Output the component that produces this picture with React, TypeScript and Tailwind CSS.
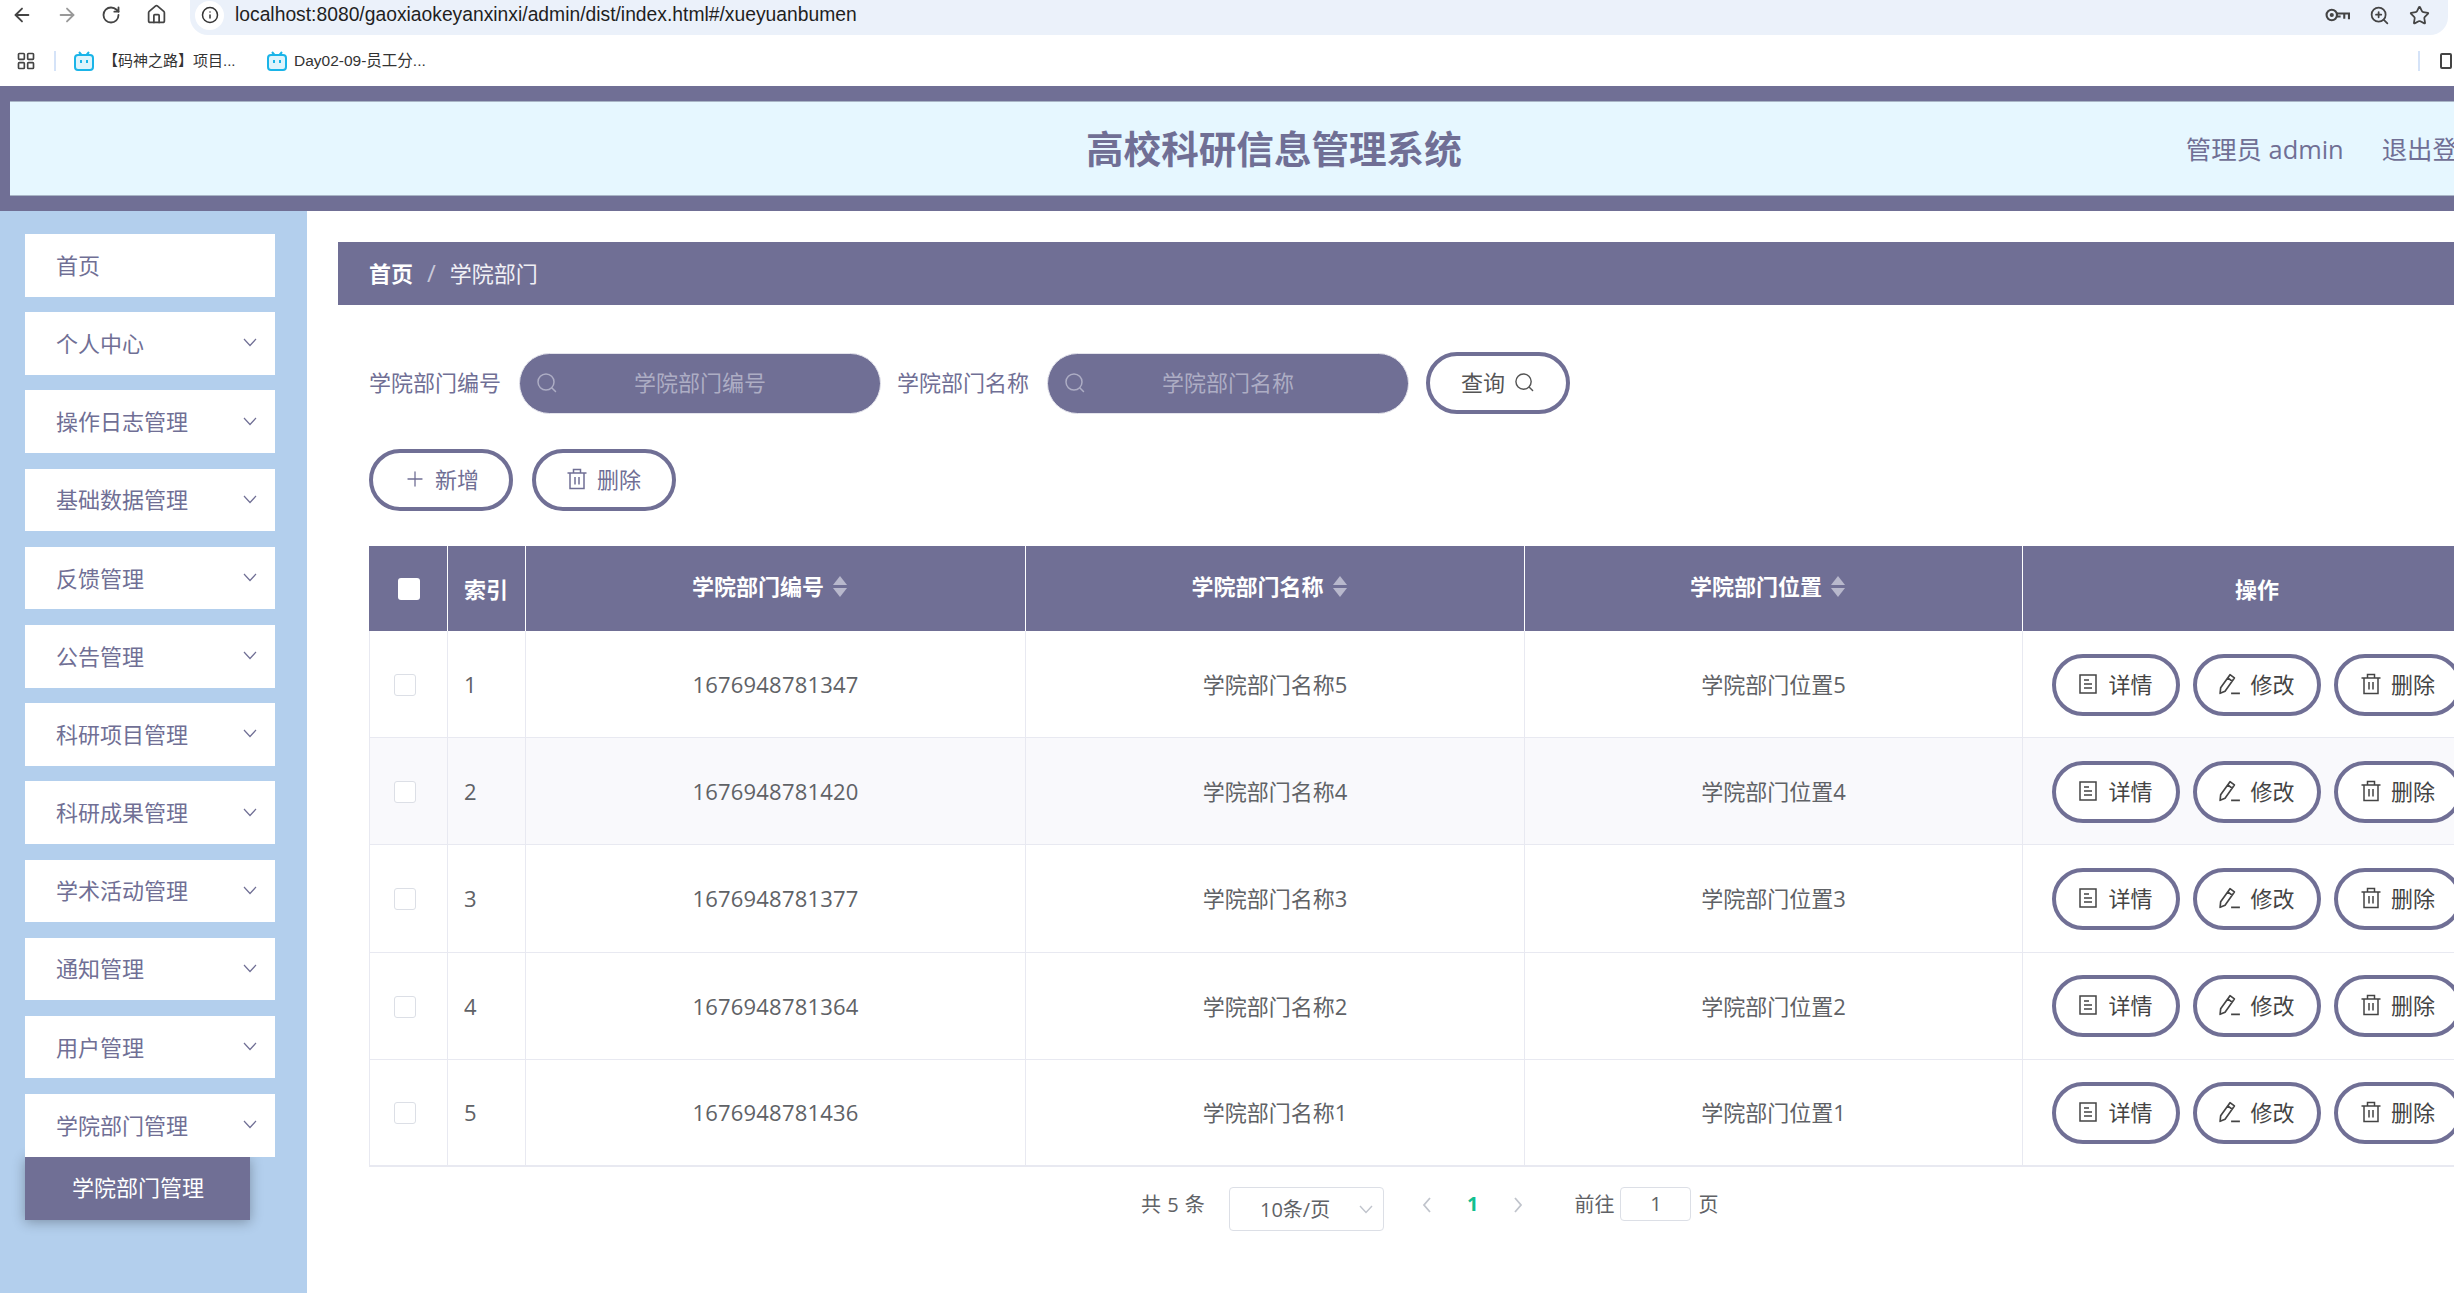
import React from "react";
import { ArrowLeft, ArrowRight, RotateCw, House, Info, ZoomIn, Star, LayoutGrid, Plus } from "lucide-react";

const SearchIcon = ({ className }: { className: string }) => (
  <svg viewBox="0 0 22 22" fill="none" stroke="currentColor" strokeWidth="1.5" strokeLinecap="round" className={className}>
    <circle cx="10" cy="10" r="8" />
    <path d="M16 16l3.5 3.5" />
  </svg>
);
const TrashIcon = ({ className }: { className: string }) => (
  <svg viewBox="0 0 20 22" fill="none" stroke="currentColor" strokeWidth="1.5" className={className}>
    <path d="M0.5 5h19M6.5 5V1.5h7V5M3 5v15.5h14V5M8 9v7.5M12 9v7.5" />
  </svg>
);
const DocIcon = ({ className }: { className: string }) => (
  <svg viewBox="0 0 18 20" fill="none" stroke="currentColor" strokeWidth="1.5" className={className}>
    <path d="M1 1h16v18H1zM5 6h5M5 10h8M5 14h8" />
  </svg>
);
const EditIcon = ({ className }: { className: string }) => (
  <svg viewBox="0 0 20 20" fill="none" stroke="currentColor" strokeWidth="1.5" strokeLinejoin="round" className={className}>
    <path d="M10 1.5l4 3-8.5 12-4.5 2 .5-5zM8 4.5l4 3M11 18.5h8" />
  </svg>
);
const Chevron = () => (
  <svg viewBox="0 0 14 9" fill="none" stroke="currentColor" strokeWidth="1.2" className="h-[9px] w-[14px] text-[#706f95]">
    <path d="M1 1l6 6.5L13 1" />
  </svg>
);
const Bili = () => (
  <svg viewBox="0 0 20 20" className="h-[20px] w-[20px] shrink-0" fill="none">
    <path d="M5 1l2.5 3M15 1l-2.5 3" stroke="#1ab4e8" strokeWidth="2" />
    <rect x="1" y="4" width="18" height="15" rx="3" fill="#dff4fc" stroke="#1ab4e8" strokeWidth="2" />
    <rect x="6" y="9" width="2" height="3" fill="#1ab4e8" />
    <rect x="12" y="9" width="2" height="3" fill="#1ab4e8" />
  </svg>
);
const KeyIcon = () => (
  <svg viewBox="0 0 24 14" fill="none" stroke="#444" strokeWidth="2" className="h-[16px] w-[25px]">
    <circle cx="6.5" cy="7" r="5" />
    <circle cx="6.5" cy="7" r="1" />
    <path d="M11 5.5h12v5.5M18.5 5.5v5M11 8.5h4" />
  </svg>
);

const menu = ["首页", "个人中心", "操作日志管理", "基础数据管理", "反馈管理", "公告管理", "科研项目管理", "科研成果管理", "学术活动管理", "通知管理", "用户管理", "学院部门管理"];
const rows = [
  ["1", "1676948781347", "学院部门名称5", "学院部门位置5"],
  ["2", "1676948781420", "学院部门名称4", "学院部门位置4"],
  ["3", "1676948781377", "学院部门名称3", "学院部门位置3"],
  ["4", "1676948781364", "学院部门名称2", "学院部门位置2"],
  ["5", "1676948781436", "学院部门名称1", "学院部门位置1"],
];

const SortHead = ({ label }: { label: string }) => (
  <div className="flex h-full items-center justify-center gap-[9px] border-r border-white pb-[5px] pr-[12px] font-bold text-white">
    <span>{label}</span>
    <span className="flex flex-col gap-[3px]">
      <span className="h-0 w-0 border-x-[7px] border-b-[9px] border-x-transparent border-b-[#b8b8cc]" />
      <span className="h-0 w-0 border-x-[7px] border-t-[9px] border-x-transparent border-t-[#b8b8cc]" />
    </span>
  </div>
);

const SearchField = ({ label }: { label: string }) => (
  <>
    <span className="pb-[2px] text-[#706f95]">{label}</span>
    <div className="relative ml-[18px] flex h-[61px] w-[362px] items-center justify-center rounded-full border border-[#e4e4ec] bg-[#706f95] pb-[2px] text-[#adadc4]">
      <SearchIcon className="absolute left-[16px] top-[18px] h-[22px] w-[22px]" />
      <span>{label}</span>
    </div>
  </>
);

const OutlineBtn = ({ children, className }: { children: React.ReactNode; className: string }) => (
  <button className={`flex h-[62px] items-center justify-center rounded-full border-[4px] border-[#706f95] bg-white pb-[2px] ${className}`}>{children}</button>
);

export default function App() {
  return (
    <div className="h-[1293px] w-[2454px] overflow-hidden bg-white font-['Open_Sans','Noto_Sans_CJK_SC',sans-serif] text-[22px] leading-[30px]">
      {/* browser chrome */}
      <div className="flex h-[35px] items-center">
        <div className="flex w-[190px] shrink-0 items-center pb-[6px] pl-[11px] text-[#444]">
          <ArrowLeft className="h-[22px] w-[22px]" strokeWidth={2} />
          <ArrowRight className="ml-[23px] h-[22px] w-[22px] text-[#999]" strokeWidth={2} />
          <RotateCw className="ml-[23px] h-[20px] w-[20px]" strokeWidth={2.2} />
          <House className="ml-[25px] h-[21px] w-[21px]" strokeWidth={2} />
        </div>
        <div className="flex h-[35px] w-[2258px] items-center justify-between rounded-b-[18px] bg-[#ebf1fa] pb-[5px] pl-[5px] pr-[18px]">
          <div className="flex items-center">
            <span className="flex h-[29px] w-[29px] items-center justify-center rounded-full bg-white">
              <Info className="h-[18px] w-[18px] text-[#333]" strokeWidth={2} />
            </span>
            <span className="ml-[11px] font-['Liberation_Sans',sans-serif] text-[19.3px] leading-[26px] text-[#1f1f1f]">localhost:8080/gaoxiaokeyanxinxi/admin/dist/index.html#/xueyuanbumen</span>
          </div>
          <div className="flex items-center gap-[19px]">
            <KeyIcon />
            <ZoomIn className="h-[21px] w-[21px] text-[#444]" strokeWidth={2} />
            <Star className="h-[21px] w-[21px] text-[#444]" strokeWidth={2} />
          </div>
        </div>
      </div>
      <div className="flex h-[51px] items-center pl-[16px] font-['Liberation_Sans','Noto_Sans_CJK_SC',sans-serif] text-[15px] leading-[20px] text-[#333]">
        <LayoutGrid className="h-[20px] w-[20px] text-[#444]" strokeWidth={2} />
        <span className="ml-[18px] h-[20px] w-[2px] bg-[#d5e3f8]" />
        <span className="ml-[18px] flex w-[193px] items-center gap-[9px]"><Bili /><span>【码神之路】项目...</span></span>
        <span className="flex items-center gap-[7px]"><Bili /><span className="text-[15.5px]">Day02-09-员工分...</span></span>
        <span className="ml-[1992px] h-[20px] w-[2px] bg-[#d5e3f8]" />
        <span className="ml-[20px] h-[16px] w-[12px] shrink-0 rounded-[2px] border-2 border-[#444]" />
      </div>
      {/* site header */}
      <div className="h-[125px] bg-[#706f95] pl-[10px] pt-[15px]">
        <div className="flex h-[95px] items-center whitespace-nowrap border-y border-[#a9b5c6] bg-[#e6f7ff] pl-[1076px] text-[#706f95]">
          <span className="shrink-0 text-[37.6px] font-bold leading-[50px]">高校科研信息管理系统</span>
          <span className="ml-[724px] shrink-0 text-[25.4px]">管理员 admin</span>
          <span className="ml-[38px] shrink-0 text-[25.4px]">退出登录</span>
        </div>
      </div>
      <div className="flex h-[1082px]">
        {/* sidebar */}
        <aside className="h-full w-[307px] shrink-0 bg-[#b3cfed] pl-[25px] pt-[23px]">
          <div className="flex w-[250px] flex-col gap-[15.6px]">
            {menu.map((m, i) => (
              <div key={m} className="flex h-[62.6px] items-center justify-between bg-white pb-[1px] pl-[31px] pr-[18px] text-[#706f95]">
                <span>{m}</span>
                {i > 0 && <Chevron />}
              </div>
            ))}
          </div>
          <div className="flex h-[63px] w-[225px] items-center bg-[#706f95] pb-[2px] pl-[47px] text-white shadow-[0_2px_12px_rgba(0,0,0,0.3)]">学院部门管理</div>
        </aside>
        {/* main */}
        <main className="min-w-0 flex-1 overflow-hidden pl-[31px] pt-[31px]">
          <div className="flex h-[63px] w-[2200px] items-center bg-[#706f95] pb-[2px] pl-[31px] text-white">
            <span className="font-bold">首页</span>
            <span className="mx-[14px] text-[24px] text-[#c8c8d8]">/</span>
            <span className="text-[#f0f0f5]">学院部门</span>
          </div>
          <div className="pl-[31px]">
            <div className="mt-[47px] flex h-[62px] items-center">
              <SearchField label="学院部门编号" />
              <span className="ml-[16px]" />
              <SearchField label="学院部门名称" />
              <OutlineBtn className="ml-[17px] w-[144px] gap-[9px] text-[#555]">
                <span>查询</span>
                <SearchIcon className="h-[21px] w-[21px]" />
              </OutlineBtn>
            </div>
            <div className="mt-[35px] flex gap-[19px] text-[#706f95]">
              <OutlineBtn className="w-[144px] gap-[8px]">
                <Plus className="h-[24px] w-[24px]" strokeWidth={1.3} />
                <span>新增</span>
              </OutlineBtn>
              <OutlineBtn className="w-[144px] gap-[10px]">
                <TrashIcon className="h-[22px] w-[20px]" />
                <span>删除</span>
              </OutlineBtn>
            </div>
            {/* table */}
            <div className="mt-[35px] w-[2124px]">
              <div className="grid h-[85px] grid-cols-[79px_78px_500px_499px_498px_468px] items-center bg-[#706f95] font-bold text-white">
                <div className="flex h-full items-center border-r border-white pl-[29px]"><span className="h-[22px] w-[22px] rounded-[3px] bg-white" /></div>
                <div className="flex h-full items-center border-r border-white pl-[16px]">索引</div>
                <SortHead label="学院部门编号" />
                <SortHead label="学院部门名称" />
                <SortHead label="学院部门位置" />
                <div className="flex h-full items-center justify-center">操作</div>
              </div>
              {rows.map((r, i) => (
                <div key={r[0]} className={`grid h-[107.2px] grid-cols-[79px_78px_500px_499px_498px_468px] items-center border-b border-[#e8e9f1] text-[#606266] ${i === 4 ? "border-b-2" : ""} ${i === 1 ? "bg-[#f9f9fc]" : "bg-white"}`}>
                  <div className="flex h-full items-center border-x border-[#e8e9f1] pl-[24px] pt-[2px]"><span className="h-[22px] w-[22px] rounded-[3px] border border-[#dcdfe6] bg-white" /></div>
                  <div className="flex h-full items-center border-r border-[#e8e9f1] pl-[16px]">{r[0]}</div>
                  <div className="flex h-full items-center justify-center border-r border-[#e8e9f1] tracking-[0.2px]">{r[1]}</div>
                  <div className="flex h-full items-center justify-center border-r border-[#e8e9f1]">{r[2]}</div>
                  <div className="flex h-full items-center justify-center border-r border-[#e8e9f1]">{r[3]}</div>
                  <div className="flex h-full items-center gap-[13px] pl-[29px] pt-[1px] text-[#444]">
                    <OutlineBtn className="w-[128px] shrink-0 gap-[11px]"><DocIcon className="h-[20px] w-[18px]" /><span>详情</span></OutlineBtn>
                    <OutlineBtn className="w-[128px] shrink-0 gap-[9px]"><EditIcon className="h-[22px] w-[22px]" /><span>修改</span></OutlineBtn>
                    <OutlineBtn className="w-[128px] shrink-0 gap-[10px]"><TrashIcon className="h-[22px] w-[20px]" /><span>删除</span></OutlineBtn>
                  </div>
                </div>
              ))}
            </div>
            {/* pagination */}
            <div className="ml-[772px] mt-[20px] flex items-start text-[20px] leading-[28px] text-[#606266]">
              <span className="mt-[4px] w-[88px] tracking-[0.5px]">共 5 条</span>
              <div className="flex h-[44px] w-[155px] items-center justify-between rounded-[4px] border border-[#dcdfe6] pl-[30px] pr-[10px] pt-[2px]">
                <span>10条/页</span>
                <svg viewBox="0 0 14 9" fill="none" stroke="#c0c4cc" strokeWidth="1.4" className="h-[9px] w-[14px]"><path d="M1 1l6 6.5L13 1" /></svg>
              </div>
              <svg viewBox="0 0 10 16" fill="none" stroke="#c0c4cc" strokeWidth="1.8" className="ml-[38px] mt-[10px] h-[16px] w-[10px]"><path d="M8 1L2 8l6 7" /></svg>
              <span className="ml-[35px] mt-[3px] font-bold text-[#12bf90]">1</span>
              <svg viewBox="0 0 10 16" fill="none" stroke="#c0c4cc" strokeWidth="1.8" className="ml-[35px] mt-[10px] h-[16px] w-[10px]"><path d="M2 1l6 7-6 7" /></svg>
              <span className="ml-[51px] mt-[4px]">前往</span>
              <span className="ml-[6px] flex h-[34px] w-[71px] items-center justify-center rounded-[4px] border border-[#dcdfe6]">1</span>
              <span className="ml-[7px] mt-[4px]">页</span>
            </div>
          </div>
        </main>
      </div>
    </div>
  );
}
